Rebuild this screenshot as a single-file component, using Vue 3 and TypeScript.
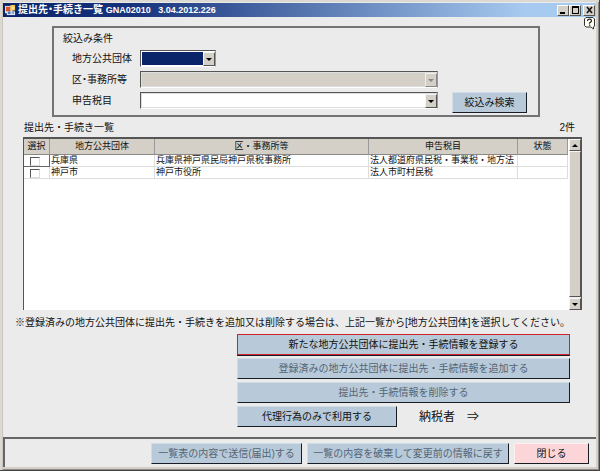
<script setup lang="ts">
import { ref } from 'vue'

interface Row {
  id: number
  selected: boolean
  body: string
  office: string
  tax: string
  status: string
}

const body = ref('')
const office = ref('')
const tax = ref('')

const rows = ref<Row[]>([
  { id: 1, selected: false, body: '兵庫県', office: '兵庫県神戸県民局神戸県税事務所', tax: '法人都道府県民税・事業税・地方法', status: '' },
  { id: 2, selected: false, body: '神戸市', office: '神戸市役所', tax: '法人市町村民税', status: '' },
])
</script>

<template>
  <div class="window">
    <header class="titlebar">
      <svg class="app-icon" viewBox="0 0 12 12" aria-hidden="true">
        <rect x="0" y="1" width="8" height="8" fill="#e8e4dc" />
        <rect x="1" y="2" width="5" height="5" fill="#d9552c" />
        <rect x="6" y="0" width="5" height="6" fill="#f6c64a" />
        <rect x="7" y="2" width="3" height="3" fill="#fbe49a" />
        <rect x="2" y="7" width="9" height="4" fill="#e9edf5" />
        <rect x="3" y="7" width="3" height="3" fill="#4b74c8" />
        <rect x="7" y="7" width="3" height="3" fill="#8da9dd" />
      </svg>
      <h1 class="title">提出先・手続き一覧 <span class="version">GNA02010&nbsp;&nbsp; 3.04.2012.226</span></h1>
      <div class="window-buttons">
        <button class="win-btn" type="button" aria-label="最小化">
          <svg viewBox="0 0 9 8"><path d="M1 6h5v2h-5z" /></svg>
        </button>
        <button class="win-btn" type="button" aria-label="最大化">
          <svg viewBox="0 0 9 8"><path fill-rule="evenodd" d="M1 0h7v8h-7zM2 2h5v5h-5z" /></svg>
        </button>
        <button class="win-btn close" type="button" aria-label="ウィンドウを閉じる">
          <svg viewBox="0 0 9 8"><path d="M2 1l5 6M7 1l-5 6" fill="none" stroke="#111" stroke-width="1.6" /></svg>
        </button>
      </div>
    </header>

    <button class="help" type="button" aria-label="ヘルプ">
      <svg viewBox="0 0 12 13">
        <path d="M2 .5h7l1.500 1.500v7l-1 1v2l-2.500-2h-5l-1.500-1.500v-6.500z" fill="#fffff4" stroke="#333" />
        <path d="M3.500 4q0-1.800 2-1.800t2 1.600q0 1-1.200 1.600t-.8 1.300" fill="none" stroke="#222" stroke-width="1.200" />
        <rect x="5" y="7.500" width="1.300" height="1.300" fill="#222" />
      </svg>
    </button>

    <main class="content">
      <section class="filter">
        <h2 class="text">絞込み条件</h2>
        <div class="filter-body">
          <div class="fields">
            <label for="body">地方公共団体</label>
            <div class="combo short">
              <select id="body" v-model="body" class="active"><option value=""></option></select>
              <span class="drop"></span>
            </div>
            <label for="office">区・事務所等</label>
            <div class="combo">
              <select id="office" v-model="office" disabled><option value=""></option></select>
              <span class="drop off"></span>
            </div>
            <label for="tax">申告税目</label>
            <div class="combo">
              <select id="tax" v-model="tax"><option value=""></option></select>
              <span class="drop"></span>
            </div>
          </div>
          <button class="btn search" type="button">絞込み検索</button>
        </div>
      </section>

      <div class="list-head">
        <h2 class="text">提出先・手続き一覧</h2>
        <span>{{ rows.length }}件</span>
      </div>

      <div class="list">
        <div class="table-area">
          <table>
            <colgroup>
              <col class="c-select" /><col class="c-body" /><col class="c-office" /><col class="c-tax" /><col class="c-status" />
            </colgroup>
            <thead>
              <tr>
                <th>選択</th><th>地方公共団体</th><th>区・事務所等</th><th>申告税目</th><th>状態</th>
              </tr>
            </thead>
            <tbody>
              <tr v-for="row in rows" :key="row.id">
                <td class="check"><input v-model="row.selected" type="checkbox" :aria-label="row.body" /></td>
                <td>{{ row.body }}</td>
                <td>{{ row.office }}</td>
                <td>{{ row.tax }}</td>
                <td>{{ row.status }}</td>
              </tr>
            </tbody>
          </table>
        </div>
        <div class="scrollbar">
          <button class="arrow" type="button" aria-label="上へ"><span class="up"></span></button>
          <div class="thumb"></div>
          <button class="arrow" type="button" aria-label="下へ"><span class="down"></span></button>
        </div>
      </div>

      <p class="note">※登録済みの地方公共団体に提出先・手続きを追加又は削除する場合は、上記一覧から[地方公共団体]を選択してください。</p>

      <div class="actions">
        <button class="btn primary" type="button">新たな地方公共団体に提出先・手続情報を登録する</button>
        <button class="btn" type="button" disabled>登録済みの地方公共団体に提出先・手続情報を追加する</button>
        <button class="btn" type="button" disabled>提出先・手続情報を削除する</button>
        <div class="agent">
          <button class="btn" type="button">代理行為のみで利用する</button>
          <span class="payer">納税者　⇒</span>
        </div>
      </div>
    </main>

    <footer class="footer">
      <button class="btn send" type="button" disabled>一覧表の内容で送信(届出)する</button>
      <button class="btn revert" type="button" disabled>一覧の内容を破棄して変更前の情報に戻す</button>
      <button class="btn exit" type="button">閉じる</button>
    </footer>
  </div>
</template>

<style>
body {
  margin: 0;
}
</style>

<style scoped>
* {
  box-sizing: border-box;
}

.window {
  position: relative;
  display: flex;
  flex-direction: column;
  min-height: 100vh;
  padding: 3px;
  border-right: 1px solid #444;
  border-bottom: 1px solid #444;
  background: #ebebeb;
  box-shadow: inset 2px 2px 0 #dcd9d3, inset 3px 0 0 #c8c5bf, inset -1px -1px 0 #8a8884, inset -3px -3px 0 #d4d0c8;
  color: #111;
  font-family: "Liberation Sans", "Noto Sans CJK JP", sans-serif;
  font-size: 10px;
  line-height: 14px;
}

button,
select {
  margin: 0;
  padding: 0;
  border-radius: 0;
  color: inherit;
  font: inherit;
}

h1,
h2,
p {
  margin: 0;
}

.titlebar {
  display: flex;
  align-items: center;
  height: 14px;
  padding: 0 1px 0 2px;
  background: linear-gradient(90deg, #0a246a, #17337c 22%, #a6caf0 88%);
  color: #fff;
}

.app-icon {
  width: 11px;
  height: 11px;
  margin-right: 2px;
}

.title {
  flex: 1;
  font-size: 10px;
  font-weight: 700;
  font-feature-settings: "halt";
  line-height: 14px;
  white-space: nowrap;
}

.version {
  font-size: 9px;
}

.window-buttons {
  display: flex;
}

.win-btn {
  display: flex;
  align-items: center;
  justify-content: center;
  width: 12px;
  height: 11px;
  border: 1px solid;
  border-color: #fff #555 #555 #fff;
  background: #d4d0c8;
}

.win-btn svg {
  flex: none;
  width: 9px;
  height: 8px;
}

.win-btn.close {
  margin-left: 2px;
}

.help {
  position: absolute;
  top: 17px;
  right: 3px;
  width: 12px;
  height: 13px;
  border: 0;
  background: none;
}

.help svg {
  display: block;
  width: 12px;
  height: 13px;
}

.content {
  display: flex;
  flex: 1;
  flex-direction: column;
  padding: 9px 14px 10px 20px;
}

.filter {
  margin: 0 42px 0 29px;
  padding: 4px 11px 6px 9px;
  border: 2px solid #737373;
}

.text {
  font-size: 10px;
  font-weight: 400;
}

.filter-body {
  display: flex;
  align-items: flex-end;
  gap: 14px;
  padding: 4px 0 0 9px;
}

.fields {
  display: grid;
  flex: 1;
  grid-template-columns: 68px 1fr;
  align-items: center;
  row-gap: 4px;
}

.fields label {
  font-feature-settings: "halt";
}

.combo {
  position: relative;
  height: 17px;
}

.combo.short {
  width: 76px;
}

.combo select {
  display: block;
  width: 100%;
  height: 100%;
  border: 1px solid;
  border-color: #555 #999 #fff #555;
  outline: 1px solid #ddd;
  outline-offset: -2px;
  appearance: none;
  background: #fff;
}

.combo select.active {
  outline-color: #fff;
  background: #0a246a;
}

.combo select:disabled {
  background: #d4d0c8;
  opacity: 1;
}

.drop {
  position: absolute;
  top: 2px;
  right: 1px;
  bottom: 1px;
  display: flex;
  align-items: center;
  justify-content: center;
  width: 12px;
  border: 1px solid;
  border-color: #f6f6f6 #555 #555 #f6f6f6;
  background: #d4d0c8;
  pointer-events: none;
}

.drop::after,
.down {
  width: 0;
  height: 0;
  border: 3px solid transparent;
  border-top-color: #000;
  border-bottom-width: 0;
  content: "";
}

.drop.off {
  border-color: #eee #888 #888 #eee;
}

.drop.off::after {
  border-top-color: #888;
}

.up {
  width: 0;
  height: 0;
  border: 3px solid transparent;
  border-top-width: 0;
  border-bottom-color: #000;
}

.btn {
  height: 21px;
  border: 1px solid;
  border-color: #d0dde7 #181c24 #181c24 #d0dde7;
  background: #b8cad9;
  line-height: 17px;
  text-align: center;
  white-space: nowrap;
}

.btn:disabled {
  color: #536575;
}

.search {
  width: 75px;
  margin-bottom: -4px;
}

.list-head {
  display: flex;
  justify-content: space-between;
  padding: 4px 7px 2px 1px;
}

.list {
  display: flex;
  flex: 1;
  min-height: 100px;
  border: solid #555;
  border-width: 2px 1px 0 1px;
  background: #fff;
}

.table-area {
  flex: 1;
  min-width: 0;
  overflow: hidden;
}

table {
  width: 100%;
  border-collapse: separate;
  border-spacing: 0;
  table-layout: fixed;
  font-size: 9px;
  line-height: 11px;
}

.c-select {
  width: 26px;
}

.c-body {
  width: 105px;
}

.c-tax {
  width: 149px;
}

.c-status {
  width: 50px;
}

th,
td {
  overflow: hidden;
  padding: 0;
  white-space: nowrap;
}

th {
  height: 16px;
  border-right: 1px solid #999;
  border-bottom: 1px solid #888;
  background: #d4d0c8;
  font-weight: 400;
}

td {
  height: 12px;
  padding-left: 1px;
  border-right: 1px solid #ddd;
  border-bottom: 1px solid #ddd;
}

.check {
  padding: 0;
  text-align: center;
}

tr:first-child .check {
  border-color: #666;
}

.check input {
  display: block;
  width: 10px;
  height: 9px;
  margin: 1px 0 0 6px;
  border: 1px solid;
  border-color: #555 #ddd #ddd #555;
  appearance: none;
  background: #fff;
}

.check input:checked {
  background: #0a246a;
}

.scrollbar {
  display: flex;
  flex-direction: column;
  width: 12px;
  margin-left: 1px;
  background: #ececea;
}

.arrow {
  display: flex;
  align-items: center;
  justify-content: center;
  height: 12px;
  border: 1px solid;
  border-color: #f6f6f6 #555 #555 #f6f6f6;
  background: #d4d0c8;
}

.thumb {
  flex: 1;
  margin-bottom: 1px;
  border: 1px solid;
  border-color: #f6f6f6 #555 #555 #f6f6f6;
  background: #d4d0c8;
}

.note {
  margin: 6px -8px 4px -8px;
  white-space: nowrap;
}

.actions {
  display: flex;
  flex-direction: column;
  align-self: flex-end;
  gap: 3px;
  width: 333px;
  margin-right: 12px;
}

.primary {
  border-color: #d4202c;
  box-shadow: 0 1px 0 #181c24;
}

.agent {
  display: flex;
  align-items: center;
  gap: 22px;
}

.agent .btn {
  width: 160px;
}

.payer {
  font-size: 12px;
}

.footer {
  display: flex;
  justify-content: flex-end;
  gap: 5px;
  padding: 4px 7px 3px 0;
  border: solid #666;
  border-width: 2px 0 0 2px;
}

.send {
  width: 151px;
}

.revert {
  width: 202px;
}

.exit {
  width: 75px;
  border-color: #fff0f0 #181c24 #181c24 #fff0f0;
  background: #fcd5d9;
}
</style>
